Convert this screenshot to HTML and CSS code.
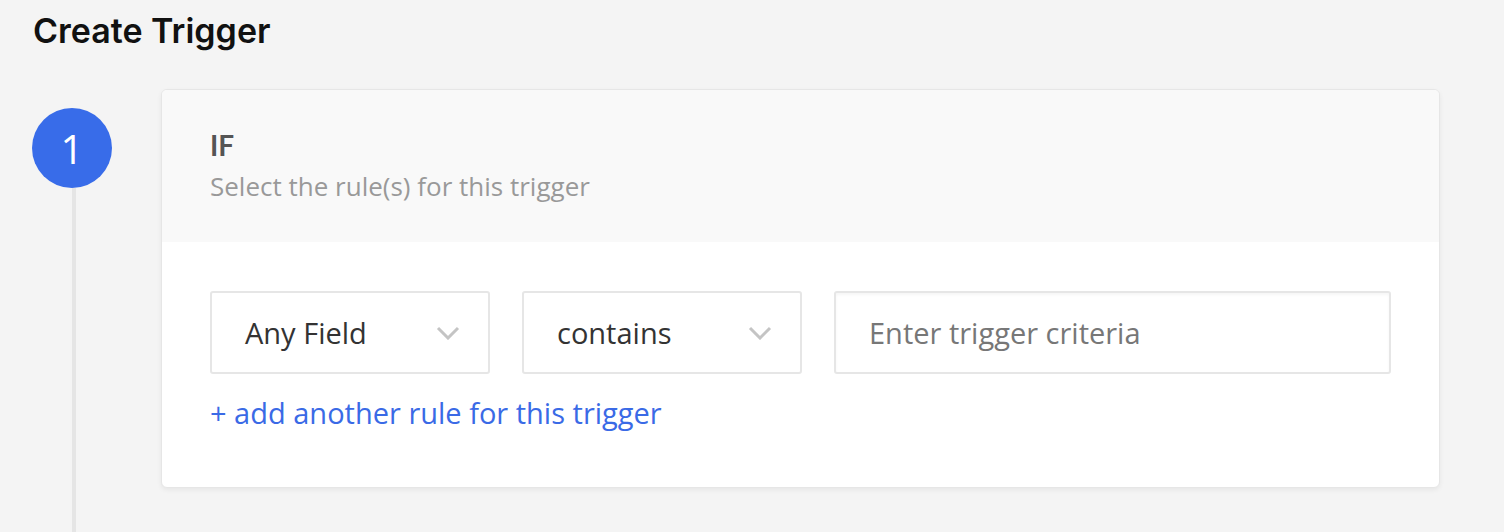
FILE: index.html
```html
<!DOCTYPE html>
<html>
<head>
<meta charset="utf-8">
<link rel="stylesheet" href="styles.css">
</head>
<body>
<div class="page">
  <h1 class="title">Create Trigger</h1>
  <div class="step">
    <div class="rail">
      <div class="badge">1</div>
      <div class="line"></div>
    </div>
    <div class="card">
      <div class="card-head">
        <div class="head-title">IF</div>
        <div class="head-sub">Select the rule(s) for this trigger</div>
      </div>
      <div class="card-body">
        <div class="rule">
          <div class="select">
            <span>Any Field</span>
            <svg class="chev" width="24" height="14" viewBox="0 0 24 14"><path d="M2 2 L12 12 L22 2" fill="none" stroke="#c4c4c4" stroke-width="3"/></svg>
          </div>
          <div class="select">
            <span>contains</span>
            <svg class="chev" width="24" height="14" viewBox="0 0 24 14"><path d="M2 2 L12 12 L22 2" fill="none" stroke="#c4c4c4" stroke-width="3"/></svg>
          </div>
          <div class="input"><span class="ph">Enter trigger criteria</span></div>
        </div>
        <a class="add" href="#">+ add another rule for this trigger</a>
      </div>
    </div>
  </div>
</div>
</body>
</html>
```
FILE: styles.css
```css
html, body {
  margin: 0;
  background: #f4f4f4;
  overflow: hidden;
}
body {
  font-family: "Open Sans", Lato, sans-serif;
}
.page {
  padding: 0 64px 0 32px;
  height: 100vh;
  box-sizing: border-box;
  display: flex;
  flex-direction: column;
}
.title {
  margin: 0;
  padding: 11px 0 0 1px;
  font-family: Inter, "Liberation Sans", sans-serif;
  font-weight: 600;
  font-size: 34px;
  line-height: 40px;
  color: #111;
  height: 58px;
  box-sizing: border-box;
}
.step {
  flex: 1;
  display: flex;
  gap: 49px;
  padding-top: 31px;
}
.rail {
  width: 80px;
  display: flex;
  flex-direction: column;
  padding-top: 19px;
}
.badge {
  width: 80px;
  height: 80px;
  flex: none;
  border-radius: 50%;
  background: #386ce9;
  color: #fff;
  display: flex;
  align-items: center;
  justify-content: center;
  font-size: 40px;
  font-family: "Open Sans", sans-serif;
  font-weight: 400;
}
.line {
  flex: 1;
  width: 4px;
  margin-left: 40px;
  background: #e5e5e5;
}
.card {
  flex: 1;
  align-self: flex-start;
  background: #fff;
  border: 1px solid #e6e6e6;
  border-radius: 6px;
  box-shadow: 0 2px 5px rgba(0,0,0,0.06);
  overflow: hidden;
}
.card-head {
  background: #f9f9f9;
  height: 152px;
  box-sizing: border-box;
  padding: 38px 48px 0;
}
.head-title {
  font-family: Lato, sans-serif;
  font-size: 28px;
  font-weight: 700;
  color: #555;
  line-height: 34px;
}
.head-sub {
  font-size: 26px;
  color: #999;
  line-height: 32px;
  margin-top: 8px;
}
.card-body {
  padding: 49px 48px 56px;
}
.rule {
  display: flex;
  gap: 32px;
}
.select, .input {
  height: 83px;
  box-sizing: border-box;
  border: 2px solid #e6e6e6;
  border-radius: 3px;
  display: flex;
  align-items: center;
  font-size: 29px;
  color: #333;
}
.select {
  width: 280px;
  padding: 0 28px 0 33px;
  justify-content: space-between;
}
.input {
  flex: 1;
  padding: 0 33px;
  box-shadow: inset 0 2px 3px rgba(0,0,0,0.04);
}
.ph {
  color: #777;
}
.chev {
  display: block;
}
.add {
  display: inline-block;
  margin-top: 21px;
  font-size: 29px;
  color: #3a6ae6;
  text-decoration: none;
  line-height: 36px;
}
```
